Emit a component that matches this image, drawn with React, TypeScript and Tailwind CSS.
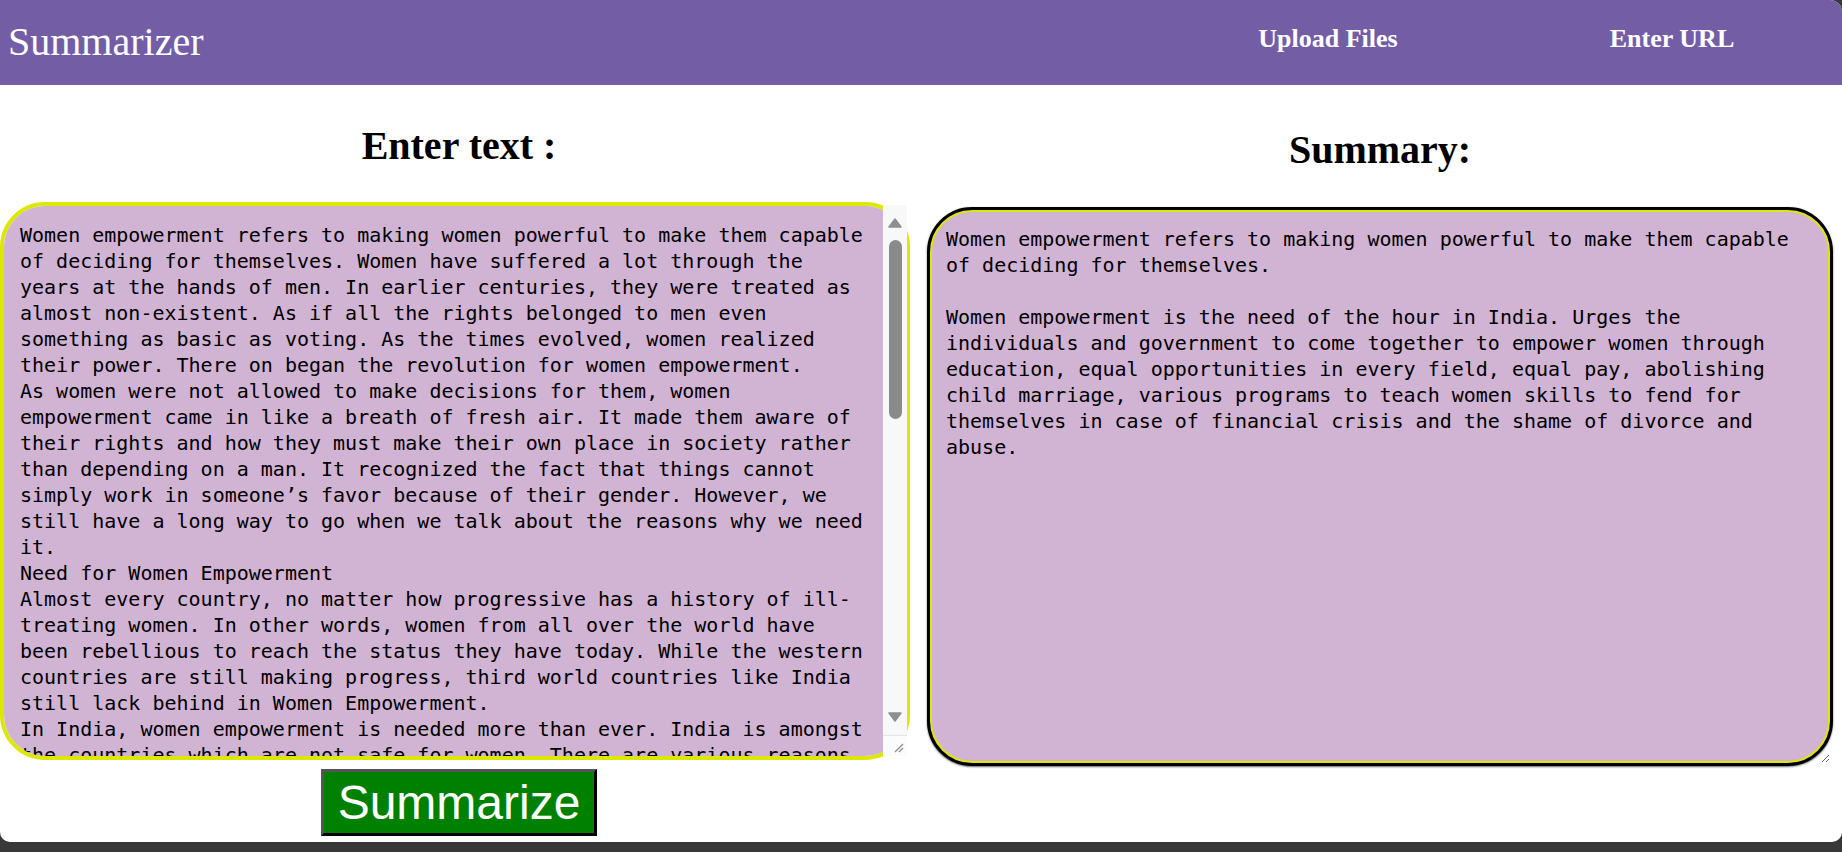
import React from 'react';

const inputText = `Women empowerment refers to making women powerful to make them capable of deciding for themselves. Women have suffered a lot through the years at the hands of men. In earlier centuries, they were treated as almost non-existent. As if all the rights belonged to men even something as basic as voting. As the times evolved, women realized their power. There on began the revolution for women empowerment.
As women were not allowed to make decisions for them, women empowerment came in like a breath of fresh air. It made them aware of their rights and how they must make their own place in society rather than depending on a man. It recognized the fact that things cannot simply work in someone’s favor because of their gender. However, we still have a long way to go when we talk about the reasons why we need it.
Need for Women Empowerment
Almost every country, no matter how progressive has a history of ill-treating women. In other words, women from all over the world have been rebellious to reach the status they have today. While the western countries are still making progress, third world countries like India still lack behind in Women Empowerment.
In India, women empowerment is needed more than ever. India is amongst the countries which are not safe for women. There are various reasons for this. Firstly, women in India are in danger of honor killings. Their family thinks its right to take their lives if they bring shame to the reputation of their legacy.
Moreover, the education and freedom scenario is very regressive here. Women are not allowed to pursue higher education, they are married off early. The men are still dominating women in some regions like it's the woman's duty to work for him endlessly.`;

const summaryText = `Women empowerment refers to making women powerful to make them capable of deciding for themselves.

Women empowerment is the need of the hour in India. Urges the individuals and government to come together to empower women through education, equal opportunities in every field, equal pay, abolishing child marriage, various programs to teach women skills to fend for themselves in case of financial crisis and the shame of divorce and abuse.`;

const serif = { fontFamily: '"Liberation Serif", "Times New Roman", serif' };
const mono = { fontFamily: '"DejaVu Sans Mono", monospace' };

const FakeScrollbar = () => (
  <>
    <div className="absolute left-[883px] top-[3px] w-[24px] h-[530px] bg-[#f8f8f8] flex flex-col items-center">
      <svg width="14" height="10" viewBox="0 0 14 10" className="mt-[13px]">
        <path d="M7 1 L13 9 L1 9 Z" fill="#8f8f8f" stroke="#8f8f8f" strokeLinejoin="round" strokeWidth="1.5" />
      </svg>
      <div className="mt-[12px] w-[13px] h-[179px] rounded-full bg-[#8a8a8a]" />
      <svg width="14" height="10" viewBox="0 0 14 10" className="mt-auto mb-[13px]">
        <path d="M1 1 L13 1 L7 9 Z" fill="#8f8f8f" stroke="#8f8f8f" strokeLinejoin="round" strokeWidth="1.5" />
      </svg>
    </div>
    {/* scroll corner with resize grip */}
    <div className="absolute left-[883px] top-[533px] w-[24px] h-[21px] bg-[#fbfbfb] border-t border-[#e4e4e4] flex items-end justify-end pr-[3px] pb-[3px]">
      <svg width="10" height="10" viewBox="0 0 10 10">
        <path d="M9 1 L1 9 M9 5 L5 9" stroke="#8a8a8a" strokeWidth="1.2" />
      </svg>
    </div>
  </>
);

export default function App() {
  return (
    <div className="min-h-screen bg-[#383838]">
      <div className="h-[842px] bg-white rounded-tr-[12px] rounded-b-[10px] overflow-hidden">
        {/* top bar */}
        <header className="h-[85px] bg-[#735ea6] flex items-center text-white" style={serif}>
          <h1 className="pl-[8px] text-[40px] leading-none font-normal pb-[2px]">Summarizer</h1>
          <nav className="ml-auto flex pb-[8px]">
            <a className="w-[348px] text-center text-[26px] font-bold cursor-pointer">Upload Files</a>
            <a className="w-[340px] text-center text-[26px] font-bold cursor-pointer">Enter URL</a>
          </nav>
        </header>

        <main className="flex">
          {/* input side */}
          <section className="w-[918px] flex flex-col">
            <h2 className="mt-[37px] text-center text-[40px] leading-[48px] font-bold" style={serif}>
              Enter text :
            </h2>
            <div className="relative mt-[32px] w-[910px] h-[558px]">
              <textarea
                defaultValue={inputText}
                spellCheck={false}
                className="block w-full h-full border-4 border-[#dde800] rounded-[45px] bg-[#d1b3d3] pl-[16px] pr-[38px] py-[16px] text-[20px] leading-[26px] text-black outline-none [scrollbar-width:none]"
                style={mono}
              />
              <FakeScrollbar />
            </div>
            <div className="flex justify-center mt-[9px]">
              <button
                className="w-[276px] h-[67px] bg-[#008000] text-white text-[48px] leading-none border-[3px] border-t-[#555] border-l-[#555] border-r-black border-b-black"
                style={{ fontFamily: '"Liberation Sans", Arial, sans-serif' }}
              >
                Summarize
              </button>
            </div>
          </section>

          {/* summary side */}
          <section className="flex-1 flex flex-col">
            <h2 className="mt-[41px] text-center text-[40px] leading-[48px] font-bold" style={serif}>
              Summary:
            </h2>
            <textarea
              readOnly
              defaultValue={summaryText}
              spellCheck={false}
              className="mt-[33px] mx-auto w-[906px] h-[559px] border-[3px] border-black rounded-[45px] bg-[#d1b3d3] px-[16px] py-[16px] text-[20px] leading-[26px] text-black outline-none shadow-[inset_0_0_0_2px_#dde800,0_1px_2px_rgba(0,0,0,0.6)]"
              style={mono}
            />
          </section>
        </main>
      </div>
    </div>
  );
}
